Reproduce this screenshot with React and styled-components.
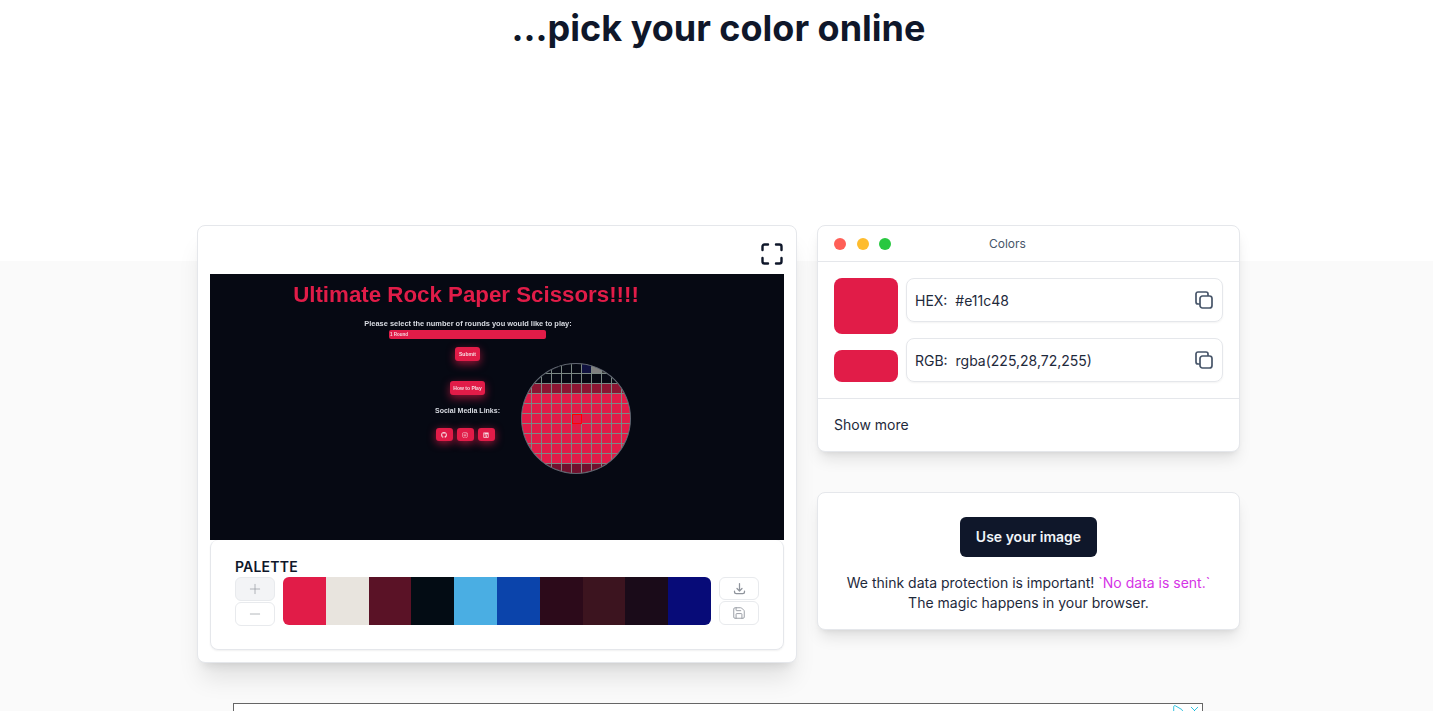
import React from "react";
import styled, { createGlobalStyle } from "styled-components";
import { Plus, Minus, Save, X, Play } from "lucide-react";
import { FaGithub, FaInstagram, FaLinkedin } from "react-icons/fa";
import { HiOutlineDownload } from "react-icons/hi";

const GlobalStyle = createGlobalStyle`
  html, body {
    margin: 0;
    padding: 0;
    overflow: hidden;
  }
  * {
    box-sizing: border-box;
  }
`;

const Page = styled.div`
  height: 711px;
  overflow: hidden;
  font-family: Inter, "Liberation Sans", sans-serif;
  color: #1e293b;
  background: linear-gradient(#fff 0, #fff 261px, #fafafa 261px);
`;
const Heading = styled.h1`
  margin: 0;
  height: 225px;
  padding: 6px 0 0 4px;
  font-size: 36px;
  line-height: 44px;
  font-weight: 700;
  text-align: center;
  color: #0f172a;
`;
const Columns = styled.div`
  display: flex;
  gap: 20px;
  align-items: flex-start;
  padding-left: 197px;
`;
const Card = styled.section`
  background: #fff;
  border: 1px solid #e5e7eb;
  border-radius: 8px;
  box-shadow: 0 10px 15px -3px rgba(0, 0, 0, 0.1), 0 4px 6px -4px rgba(0, 0, 0, 0.1);
`;
const PickerCard = styled(Card)`
  width: 600px;
  height: 438px;
  padding: 0 12px;
  box-shadow: 0 20px 25px -5px rgba(0, 0, 0, 0.1), 0 8px 10px -6px rgba(0, 0, 0, 0.1);
`;
const PickerTop = styled.div`
  height: 48px;
  display: flex;
  justify-content: flex-end;
  align-items: flex-end;
  padding-bottom: 8px;
  svg {
    display: block;
  }
`;
const Shot = styled.div`
  position: relative;
  height: 266px;
  background: #060913;
  font-family: "Liberation Sans", sans-serif;
  display: flex;
  flex-direction: column;
  align-items: center;
  padding: 8px 62px 0 0;
  color: #d8dbe2;
`;
const ShotTitle = styled.div`
  font-size: 22.3px;
  line-height: 25px;
  font-weight: 700;
  color: #e11c48;
  white-space: nowrap;
  filter: blur(0.3px);
`;
const ShotLabel = styled.div`
  margin-top: ${(p) => p.$top}px;
  margin-left: ${(p) => p.$left}px;
  font-size: ${(p) => p.$size}px;
  line-height: 10px;
  font-weight: 700;
  white-space: nowrap;
  filter: blur(0.25px);
`;
const ShotSelect = styled.div`
  width: 157px;
  height: 9px;
  margin-top: 1px;
  margin-left: 3px;
  padding-left: 1px;
  border-radius: 2px;
  background: #e11c48;
  color: #f5d5dc;
  font-size: 4.5px;
  line-height: 9px;
  font-weight: 700;
  filter: blur(0.25px);
`;
const ShotButton = styled.div`
  width: ${(p) => p.$w}px;
  height: 14px;
  margin-top: ${(p) => p.$top}px;
  margin-left: 3px;
  border-radius: 3px;
  background: #e11c48;
  color: #f6dbe1;
  font-size: 5px;
  font-weight: 700;
  line-height: 14px;
  text-align: center;
  box-shadow: 0 3px 9px rgba(225, 28, 72, 0.65);
  filter: blur(0.25px);
`;
const ShotIcons = styled.div`
  display: flex;
  gap: 4px;
  margin: 12px 0 0 -2px;
`;
const ShotIcon = styled.div`
  width: 17px;
  height: 13px;
  border-radius: 3px;
  background: #e11c48;
  color: #f6dbe1;
  display: flex;
  justify-content: center;
  align-items: center;
  font-size: 6px;
  box-shadow: 0 2px 8px rgba(225, 28, 72, 0.7);
  filter: blur(0.25px);
`;
const Loupe = styled.div`
  position: absolute;
  left: 311px;
  top: 89px;
  width: 110px;
  height: 111px;
  border-radius: 50%;
  border: 1px solid #5f6470;
  overflow: hidden;
  display: grid;
  grid-template-columns: repeat(11, 10px);
  grid-auto-rows: 10px;
  background: #7b8884;
`;
const LoupeCell = styled.div`
  position: relative;
  background: ${(p) => p.$color};
  border-right: 1px solid #7b8884;
  border-bottom: 1px solid #7b8884;
  ${(p) => p.$target && "z-index: 1; border: 1px solid #ff0000;"}
`;
const PalettePanel = styled.div`
  height: 110px;
  border: 1px solid #e5e7eb;
  border-top: 0;
  border-radius: 8px;
  box-shadow: 0 1px 2px rgba(0, 0, 0, 0.06);
  padding: 18px 24px 0 24px;
`;
const PaletteLabel = styled.div`
  font-size: 14px;
  line-height: 17px;
  font-weight: 600;
  letter-spacing: 0.2px;
  color: #0f172a;
`;
const PaletteRow = styled.div`
  display: flex;
  gap: 8px;
  margin-top: 2px;
`;
const ButtonStack = styled.div`
  display: flex;
  flex-direction: column;
  gap: 1px;
  width: 40px;
`;
const SmallButton = styled.div`
  height: ${(p) => p.$h}px;
  border: 1px solid #e8eaed;
  border-radius: 6px;
  background: ${(p) => (p.$filled ? "#f3f4f6" : "#fff")};
  color: #8f949c;
  display: flex;
  justify-content: center;
  align-items: center;
`;
const Swatches = styled.div`
  display: flex;
  width: 428px;
  height: 48px;
  border-radius: 6px;
  overflow: hidden;
`;
const Swatch = styled.div`
  flex: 1;
  background: ${(p) => p.$color};
`;
const SideColumn = styled.div`
  width: 423px;
  display: flex;
  flex-direction: column;
  gap: 40px;
`;
const ColorsCard = styled(Card)`
  height: 227px;
`;
const TitleBar = styled.div`
  height: 36px;
  display: flex;
  align-items: center;
  gap: 11px;
  padding-left: 16px;
  border-bottom: 1px solid #e5e7eb;
`;
const Dot = styled.span`
  width: 12px;
  height: 12px;
  margin-right: ${(p) => p.$gap || 0}px;
  border-radius: 50%;
  background: ${(p) => p.$color};
`;
const BarTitle = styled.span`
  margin-left: 87px;
  font-size: 12px;
  color: #475569;
`;
const ColorRows = styled.div`
  display: flex;
  gap: 8px;
  height: 137px;
  padding: 16px;
  border-bottom: 1px solid #e5e7eb;
`;
const SwatchColumn = styled.div`
  width: 64px;
  display: flex;
  flex-direction: column;
  gap: 16px;
`;
const ValueColumn = styled.div`
  flex: 1;
  display: flex;
  flex-direction: column;
  gap: 16px;
`;
const BigSwatch = styled.div`
  height: ${(p) => p.$h}px;
  border-radius: 8px;
  background: #e11c48;
`;
const ValueBox = styled.div`
  height: 44px;
  display: flex;
  align-items: center;
  justify-content: space-between;
  padding: 0 9px 0 8px;
  border: 1px solid #e5e7eb;
  border-radius: 8px;
  box-shadow: 0 1px 2px rgba(0, 0, 0, 0.05);
  font-size: 14px;
  color: #1e293b;
  white-space: pre;
`;
const ShowMore = styled.div`
  padding: 17px 16px;
  font-size: 14px;
  line-height: 18px;
  color: #1e293b;
`;
const ImageCard = styled(Card)`
  height: 138px;
  padding-top: 24px;
  text-align: center;
  font-size: 14px;
  line-height: 20px;
  color: #1e293b;
`;
const PrimaryButton = styled.div`
  width: 137px;
  height: 40px;
  margin: 0 auto 16px;
  border-radius: 6px;
  background: #0f172a;
  color: #f1f5f9;
  font-size: 14px;
  font-weight: 600;
  line-height: 40px;
`;
const Pink = styled.span`
  color: #d534e6;
`;
const AdFrame = styled.div`
  position: relative;
  width: 970px;
  height: 90px;
  margin: 40px 0 0 233px;
  background: #fff;
  border: 1px solid #666;
`;
const AdIcons = styled.div`
  position: absolute;
  top: 0;
  right: 1px;
  display: flex;
  gap: 4px;
  color: #00b4d8;
`;

const swatches = [
  "#e11c48", "#e8e4de", "#5a1226", "#030c14", "#4aaee3",
  "#0b44ab", "#2c0a1a", "#3c141f", "#1a0b19", "#070b78",
];

const cellColor = (row, col) => {
  if (row < 2) {
    if (row === 0 && col === 6) return "#10123f";
    if (row === 0 && col === 7) return "#808080";
    if (row === 0 && col === 8) return "#3a3a3c";
    return "#060913";
  }
  if (row === 2) return "#8c1532";
  if (row === 10) return "#70102d";
  return "#e11c48";
};

const cells = [];
for (let row = 0; row < 11; row++) {
  for (let col = 0; col < 11; col++) {
    cells.push({ row, col, color: cellColor(row, col) });
  }
}

const FullscreenIcon = () => (
  <svg width="24" height="24" viewBox="0 0 24 24" fill="none" stroke="#0f172a" strokeWidth="2.4" strokeLinecap="round">
    <path d="M2.5 8V4.5a2 2 0 0 1 2-2H8" />
    <path d="M16 2.5h3.5a2 2 0 0 1 2 2V8" />
    <path d="M2.5 16v3.5a2 2 0 0 0 2 2H8" />
    <path d="M16 21.5h3.5a2 2 0 0 0 2-2V16" />
  </svg>
);

const CopyIcon = () => (
  <svg width="18" height="18" viewBox="0 0 18 18" fill="none" stroke="#475569" strokeWidth="1.7" strokeLinejoin="round">
    <rect x="5" y="5" width="12" height="12" rx="2.5" />
    <path d="M5 13H3a2 2 0 0 1-2-2V3a2 2 0 0 1 2-2h8a2 2 0 0 1 2 2v2" />
  </svg>
);

const App = () => {
  return (
    <Page>
      <GlobalStyle />
      <Heading>...pick your color online</Heading>
      <Columns>
        <PickerCard>
          <PickerTop>
            <FullscreenIcon />
          </PickerTop>
          <Shot>
            <ShotTitle>Ultimate Rock Paper Scissors!!!!</ShotTitle>
            <ShotLabel $top={12} $size={7.45} $left={4}>
              Please select the number of rounds you would like to play:
            </ShotLabel>
            <ShotSelect>1 Round</ShotSelect>
            <ShotButton $w={25} $top={8}>Submit</ShotButton>
            <ShotButton $w={35} $top={20}>How to Play</ShotButton>
            <ShotLabel $top={11} $size={7} $left={3}>Social Media Links:</ShotLabel>
            <ShotIcons>
              <ShotIcon><FaGithub /></ShotIcon>
              <ShotIcon><FaInstagram /></ShotIcon>
              <ShotIcon><FaLinkedin /></ShotIcon>
            </ShotIcons>
            <Loupe>
              {cells.map((c) => (
                <LoupeCell
                  key={`${c.row}-${c.col}`}
                  $color={c.color}
                  $target={c.row === 5 && c.col === 5}
                />
              ))}
            </Loupe>
          </Shot>
          <PalettePanel>
            <PaletteLabel>PALETTE</PaletteLabel>
            <PaletteRow>
              <ButtonStack>
                <SmallButton $h={24} $filled><Plus size={16} strokeWidth={1} /></SmallButton>
                <SmallButton $h={24}><Minus size={16} strokeWidth={1} /></SmallButton>
              </ButtonStack>
              <Swatches>
                {swatches.map((color) => (
                  <Swatch key={color} $color={color} />
                ))}
              </Swatches>
              <ButtonStack>
                <SmallButton $h={23}><HiOutlineDownload size={15} /></SmallButton>
                <SmallButton $h={24}><Save size={14} strokeWidth={1.5} /></SmallButton>
              </ButtonStack>
            </PaletteRow>
          </PalettePanel>
        </PickerCard>
        <SideColumn>
          <ColorsCard>
            <TitleBar>
              <Dot $color="#ff5f57" />
              <Dot $color="#febc2e" $gap={-1} />
              <Dot $color="#28c840" />
              <BarTitle>Colors</BarTitle>
            </TitleBar>
            <ColorRows>
              <SwatchColumn>
                <BigSwatch $h={56} />
                <BigSwatch $h={32} />
              </SwatchColumn>
              <ValueColumn>
                <ValueBox>
                  {"HEX:  #e11c48"}
                  <CopyIcon />
                </ValueBox>
                <ValueBox>
                  {"RGB:  rgba(225,28,72,255)"}
                  <CopyIcon />
                </ValueBox>
              </ValueColumn>
            </ColorRows>
            <ShowMore>Show more</ShowMore>
          </ColorsCard>
          <ImageCard>
            <PrimaryButton>Use your image</PrimaryButton>
            We think data protection is important! <Pink>`No data is sent.`</Pink>
            <br />
            The magic happens in your browser.
          </ImageCard>
        </SideColumn>
      </Columns>
      <AdFrame>
        <AdIcons>
          <Play size={13} strokeWidth={1.5} />
          <X size={13} strokeWidth={1.5} />
        </AdIcons>
      </AdFrame>
    </Page>
  );
};

export default App;
